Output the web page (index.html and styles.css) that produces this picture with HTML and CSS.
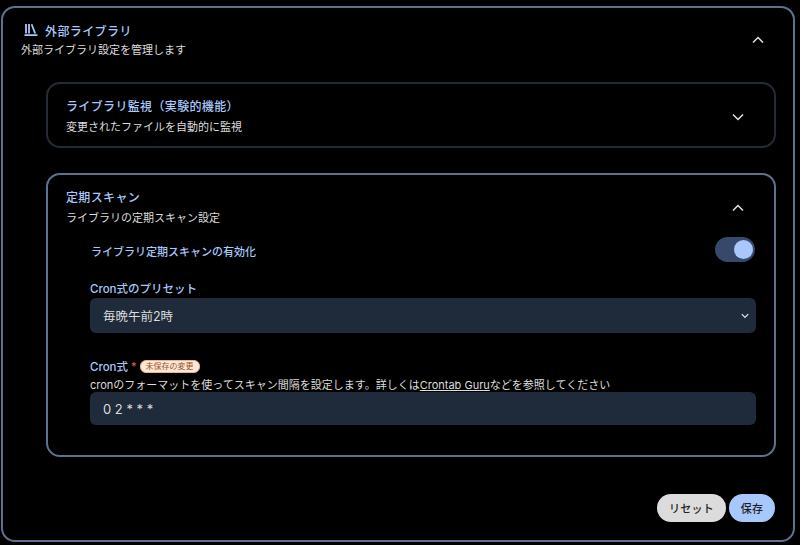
FILE: index.html
```html
<!DOCTYPE html>
<html lang="ja">
<head>
    <meta charset="UTF-8">
    <meta name="viewport" content="width=device-width, initial-scale=1.0">
    <title>外部ライブラリ</title>
    <link rel="stylesheet" href="styles.css">
</head>
<body>
    <div class="panel">
        <!-- Panel header -->
        <div class="panel-header">
            <div>
                <div class="panel-title">
                    <svg class="title-icon" viewBox="0 0 16 16" width="16" height="16">
                        <path d="M1.5 13.2h13M3 2v9.5M6 2v9.5M8.6 2.2l3.6 9.3" fill="none" stroke="#a8c7fa" stroke-width="1.8"/>
                    </svg>
                    <span>外部ライブラリ</span>
                </div>
                <div class="subtitle">外部ライブラリ設定を管理します</div>
            </div>
            <svg class="chevron" viewBox="0 0 12 8" width="12" height="8">
                <path d="M1 6.5l5-5 5 5" fill="none" stroke="#e3e3e3" stroke-width="1.5"/>
            </svg>
        </div>

        <div class="panel-body">
            <!-- Library watch card -->
            <div class="card card-closed">
                <div class="card-header">
                    <div>
                        <div class="card-title">ライブラリ監視（実験的機能）</div>
                        <div class="subtitle">変更されたファイルを自動的に監視</div>
                    </div>
                    <svg class="chevron" viewBox="0 0 12 8" width="12" height="8">
                        <path d="M1 1.5l5 5 5-5" fill="none" stroke="#e3e3e3" stroke-width="1.5"/>
                    </svg>
                </div>
            </div>

            <!-- Scheduled scan card -->
            <div class="card card-open">
                <div class="card-header">
                    <div>
                        <div class="card-title">定期スキャン</div>
                        <div class="subtitle">ライブラリの定期スキャン設定</div>
                    </div>
                    <svg class="chevron" viewBox="0 0 12 8" width="12" height="8">
                        <path d="M1 6.5l5-5 5 5" fill="none" stroke="#e3e3e3" stroke-width="1.5"/>
                    </svg>
                </div>

                <div class="card-body">
                    <div class="switch-row">
                        <span class="field-label switch-label">ライブラリ定期スキャンの有効化</span>
                        <div class="switch"><div class="switch-thumb"></div></div>
                    </div>

                    <div class="field-label preset-label">Cron式のプリセット</div>
                    <div class="input-box select-box">
                        <span>毎晩午前2時</span>
                        <svg viewBox="0 0 10 7" width="8" height="6">
                            <path d="M1 1.2l4 4 4-4" fill="none" stroke="#e3e3e3" stroke-width="1.6"/>
                        </svg>
                    </div>

                    <div class="cron-label">
                        <span class="field-label">Cron式</span>
                        <span class="required">*</span>
                        <span class="badge">未保存の変更</span>
                    </div>
                    <div class="help-text">cronのフォーマットを使ってスキャン間隔を設定します。詳しくは<a href="#">Crontab Guru</a>などを参照してください</div>
                    <div class="input-box cron-input">0 2 * * *</div>
                </div>
            </div>
        </div>

        <div class="panel-actions">
            <button class="btn btn-reset">リセット</button>
            <button class="btn btn-save">保存</button>
        </div>
    </div>
</body>
</html>
```

FILE: styles.css
```css
* {
    box-sizing: border-box;
}
html, body {
    height: 100%;
}
body {
    margin: 0;
    padding: 6px 5px 3px 1px;
    background-color: #000;
    color: #dcdcdc;
    font-family: Inter, "Noto Sans CJK JP", sans-serif;
    overflow: hidden;
}
.panel {
    height: 536px;
    display: flex;
    flex-direction: column;
    border: 2px solid #5d7290;
    border-radius: 14px;
}
.panel-header {
    display: flex;
    justify-content: space-between;
    align-items: center;
    padding: 12px 29px 0 18px;
}
.panel-title {
    display: flex;
    align-items: center;
    gap: 6px;
    height: 20px;
    padding-left: 2px;
    font-size: 12px;
    font-weight: 500;
    letter-spacing: 0.4px;
    color: #a8c7fa;
}
.subtitle {
    font-size: 11px;
    line-height: 20px;
}
.panel-body {
    padding: 22px 17px 0 43px;
}
.card {
    border-radius: 14px;
}
.card-closed {
    height: 66px;
    border: 2px solid #232b36;
}
.card-open {
    height: 284px;
    margin-top: 25px;
    border: 2px solid #5d7290;
}
.card-header {
    display: flex;
    justify-content: space-between;
    align-items: center;
    padding: 13px 30px 0 18px;
}
.card-title {
    font-size: 12px;
    font-weight: 500;
    letter-spacing: 0.35px;
    line-height: 20px;
    color: #a8c7fa;
}
.card-body {
    padding: 0 18px 0 42px;
}
.switch-row {
    display: flex;
    justify-content: space-between;
    align-items: center;
    height: 26px;
    margin-top: 8px;
}
.field-label {
    font-size: 11.5px;
    font-weight: 500;
    color: #a8c7fa;
}
.switch-label {
    padding-top: 3px;
    padding-left: 1px;
    font-size: 11px;
}
.switch {
    display: flex;
    justify-content: flex-end;
    align-items: center;
    width: 40px;
    height: 25px;
    margin-right: 1px;
    padding-right: 2px;
    background-color: #37496a;
    border-radius: 13px;
}
.switch-thumb {
    width: 19px;
    height: 19px;
    background-color: #a8c7fa;
    border-radius: 50%;
}
.preset-label {
    margin-top: 19px;
    line-height: 17px;
}
.input-box {
    display: flex;
    align-items: center;
    height: 33px;
    padding: 0 13px;
    font-size: 12.5px;
    background-color: #1f2a3a;
    border-radius: 6px;
}
.select-box {
    justify-content: space-between;
    height: 35px;
    padding-right: 7px;
}
.cron-input {
    font-size: 13px;
}
.cron-label {
    display: flex;
    align-items: center;
    gap: 3px;
    height: 16px;
    margin-top: 25px;
}
.required {
    color: #e25c5c;
    font-size: 11px;
}
.badge {
    padding: 0 5px;
    font-size: 8px;
    line-height: 11px;
    color: #9c5030;
    background-color: #ffe8d4;
    border: 0.5px solid #e8b48c;
    border-radius: 6px;
}
.help-text {
    margin-top: 5px;
    font-size: 11px;
    line-height: 13px;
    white-space: nowrap;
}
.help-text a {
    color: #dcdcdc;
}
.panel-actions {
    display: flex;
    justify-content: flex-end;
    gap: 3px;
    margin-top: auto;
    padding: 0 18px 18px 0;
}
.btn {
    height: 28px;
    border: none;
    border-radius: 14px;
    font-family: inherit;
    font-size: 11px;
    font-weight: 500;
    letter-spacing: 0.3px;
    color: #1f1f1f;
    cursor: pointer;
}
.btn-reset {
    width: 69px;
    background-color: #dcdcdc;
}
.btn-save {
    width: 46px;
    background-color: #a8c7fa;
}
```
